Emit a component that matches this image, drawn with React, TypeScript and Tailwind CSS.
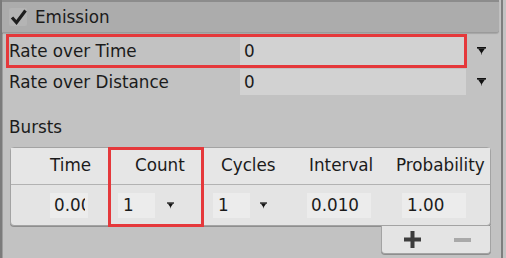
import React from "react";

function Arrow({ small }: { small?: boolean }) {
  const w = small ? 7 : 9;
  return (
    <svg width={w} height={small ? 7 : 8} viewBox="0 0 9 8" className="shrink-0">
      <rect x="0" y="0" width="9" height="1.6" fill="#111" />
      <polygon points="1,1.5 8,1.5 4.5,6.5" fill="#111" />
      <rect x="4" y="6" width="1" height="1.5" fill="#555" />
    </svg>
  );
}

function Check() {
  return (
    <div className="w-[18px] h-[18px] flex items-center justify-center bg-[#b4b4b4] rounded-[2px]">
      <svg width="17" height="16" viewBox="0 0 17 16">
        <path d="M2 8.5 L6.5 13.5 L15.5 1.5" fill="none" stroke="#1e1e1e" strokeWidth="3.2" strokeLinejoin="miter" />
      </svg>
    </div>
  );
}

const columns = [
  { name: "Time", width: "w-[97px]", headPad: "pl-[39px]" },
  { name: "Count", width: "w-[96px]", headPad: "pl-[27px]" },
  { name: "Cycles", width: "w-[89px]", headPad: "pl-[17px]" },
  { name: "Interval", width: "w-[96px]", headPad: "pl-[16px]" },
  { name: "Probability", width: "w-[101px]", headPad: "pl-[7px]" },
];

function BurstCell({ index }: { index: number }) {
  if (index === 0) {
    return (
      <div className="ml-[39px] w-[38px] h-[25px] bg-[#ececec] pl-[4px] leading-[25px]">
        <div className="w-[31px] overflow-hidden whitespace-nowrap">0.00</div>
      </div>
    );
  }
  if (index === 1 || index === 2) {
    return (
      <div className={`flex items-center ${index === 1 ? "ml-[10px]" : "ml-[9px]"}`}>
        <div className="w-[37px] h-[25px] bg-[#ececec] pl-[5px] leading-[25px]">1</div>
        <div className={index === 1 ? "ml-[12px]" : "ml-[10px]"}>
          <Arrow small />
        </div>
      </div>
    );
  }
  return (
    <div
      className={`w-[64px] h-[25px] bg-[#ececec] leading-[25px] ${
        index === 3 ? "ml-[14px] pl-[4px]" : "ml-[13px] pl-[5px]"
      }`}
    >
      {index === 3 ? "0.010" : "1.00"}
    </div>
  );
}

export default function App() {
  return (
    <div
      className="w-[506px] h-[258px] bg-[#c3c3c3] flex overflow-hidden text-[16.8px] text-[#1b1b1b]"
      style={{ fontFamily: '"DejaVu Sans", "Liberation Sans", sans-serif' }}
    >
      <div className="w-[503px] h-full bg-[#c2c2c2] border-l-2 border-l-[#7b7b7b] border-r-2 border-r-[#7e7e7e] shadow-[inset_1px_0_0_#9e9e9e] flex flex-col">
        {/* header */}
        <div className="h-[33px] mr-[2px] bg-[#acacac] border-t-2 border-t-[#8c8c8c] border-b border-b-[#9a9a9a] rounded-br-[3px] shadow-[0_1px_1px_rgba(0,0,0,0.15)] flex items-center pl-[7px]">
          <Check />
          <span className="ml-[8px] leading-none">Emission</span>
        </div>

        {/* rate over time */}
        <div className="flex items-center mt-[1px]">
          <div className="ml-[4px] w-[461px] h-[34px] border-[3px] border-[#e5383b] flex items-center">
            <div className="w-[231px] leading-none">Rate over Time</div>
            <div className="w-[224px] h-[28px] bg-[#d2d2d2] pl-[4px] leading-[28px]">0</div>
          </div>
          <div className="ml-[10px]">
            <Arrow />
          </div>
        </div>

        {/* rate over distance */}
        <div className="flex items-center h-[28px]">
          <div className="pl-[7px] w-[238px] leading-none">Rate over Distance</div>
          <div className="w-[226px] h-[26px] bg-[#d2d2d2] pl-[4px] leading-[26px]">0</div>
          <div className="ml-[11px]">
            <Arrow />
          </div>
        </div>

        <div className="mt-[22px] pl-[7px] leading-[19px]">Bursts</div>

        {/* bursts table */}
        <div className="ml-[8px] mt-[10px] w-[481px] flex flex-col items-end">
          <div className="w-full flex bg-[#e4e4e4] border border-[#a3a3a3] rounded-[4px] shadow-[0_1px_0_#8e8e8e]">
            {columns.map((col, i) => (
              <div key={col.name} className={`${col.width} relative flex flex-col ${i === 4 ? "overflow-hidden" : ""}`}>
                <div
                  className={`h-[37px] border-b border-b-[#b2b2b2] bg-[#e6e6e6] flex items-center whitespace-nowrap ${col.headPad}`}
                >
                  {col.name}
                </div>
                <div className="h-[40px] flex items-center">
                  <BurstCell index={i} />
                </div>
                {i === 1 && (
                  <div className="absolute -top-[1px] -bottom-[2px] left-0 right-0 border-[3px] border-[#e5383b] pointer-events-none" />
                )}
              </div>
            ))}
          </div>
          <div className="w-[110px] h-[28px] bg-[#e4e4e4] border border-t-0 border-[#a3a3a3] rounded-b-[4px] shadow-[0_1px_0_#8e8e8e] flex items-center">
            <svg width="17" height="17" viewBox="0 0 17 17" className="ml-[22px]">
              <rect x="6.5" y="0" width="4" height="17" fill="#3d3d3d" />
              <rect x="0" y="6.5" width="17" height="4" fill="#3d3d3d" />
            </svg>
            <svg width="17" height="4" viewBox="0 0 17 4" className="ml-[33px]">
              <rect x="0" y="0" width="17" height="4" fill="#a9a9a9" />
            </svg>
          </div>
        </div>
      </div>
    </div>
  );
}
